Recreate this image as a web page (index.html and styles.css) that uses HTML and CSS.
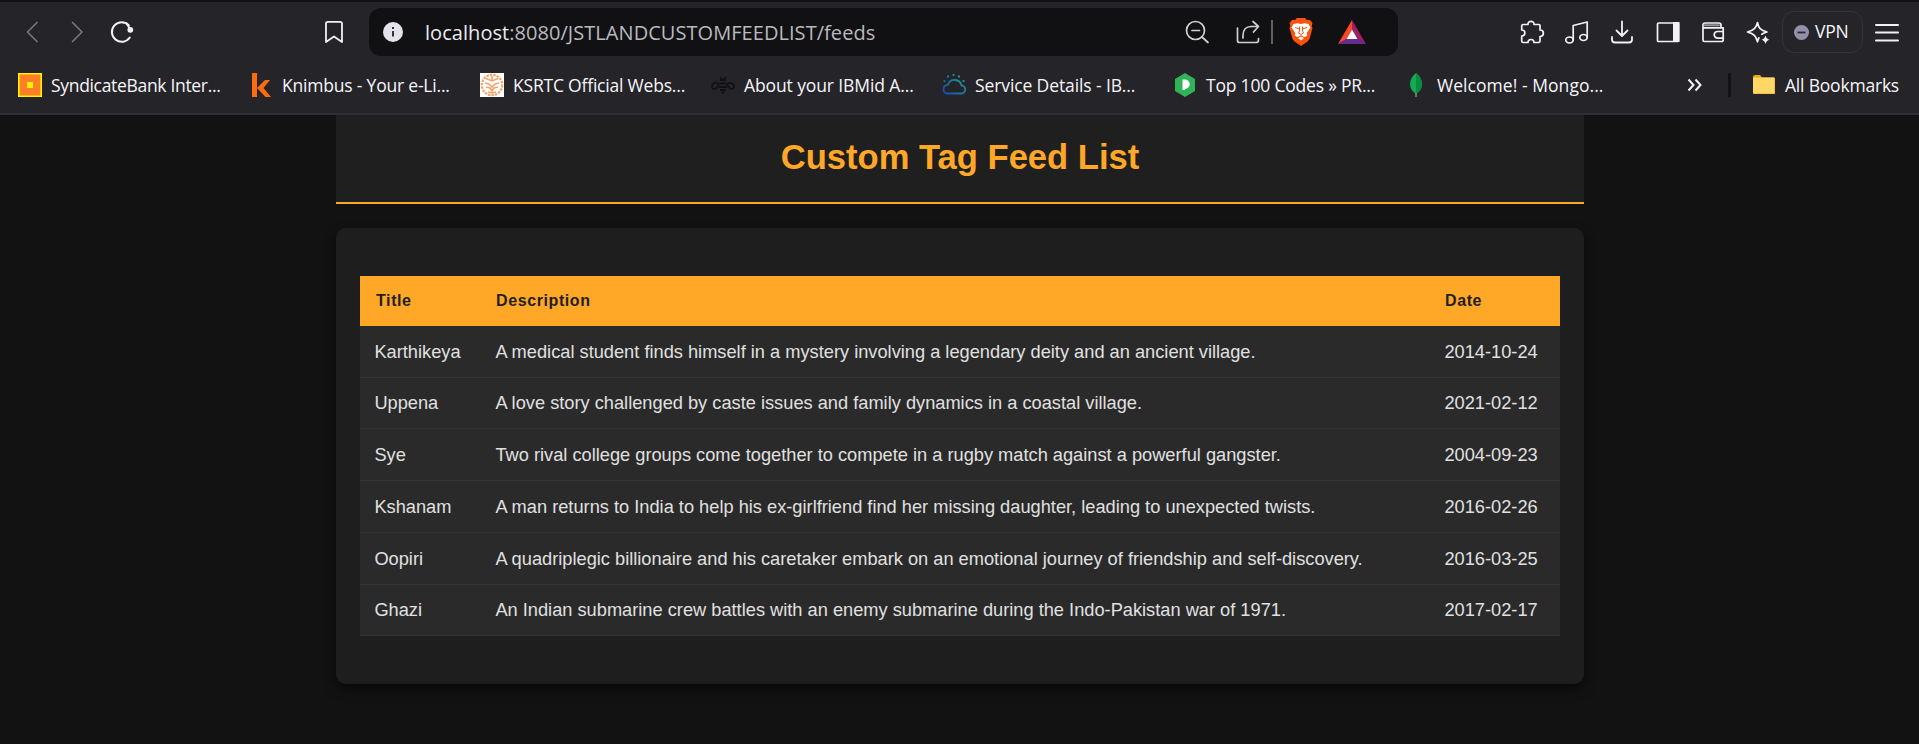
FILE: index.html
```html
<!DOCTYPE html>
<html lang="en">
<head>
<meta charset="utf-8">
<title>Custom Tag Feed List</title>
<link rel="stylesheet" href="styles.css">
</head>
<body>
<div class="browser">
  <div class="toolbar">
    <div class="nav">
      <svg class="icon dim" viewBox="0 0 28 28"><path d="M19 4.500 9.500 14l9.500 9.500"/></svg>
      <svg class="icon dim" viewBox="0 0 28 28"><path d="M9.500 4.500 19 14l-9.500 9.500"/></svg>
      <svg class="icon" viewBox="0 0 28 28"><path stroke-width="2" d="M21.800 19.500A9.800 9.800 0 1 1 20.800 7.200"/><circle class="solid" stroke="none" cx="22.300" cy="11.800" r="2.900"/><path stroke-width="2" d="M18.500 5.300 22 11"/></svg>
    </div>
    <svg class="icon mark" viewBox="0 0 28 28"><path stroke-width="1.800" d="M7.800 3.800h12.400a1.800 1.800 0 0 1 1.800 1.800V24l-8-5.500L6 24V5.600a1.800 1.800 0 0 1 1.800-1.800z"/></svg>
    <div class="address">
      <svg class="info" viewBox="0 0 20 20"><circle cx="10" cy="10" r="10" fill="#e4e2ea"/><path d="M10 9v5.500M10 5v2" stroke="#333238" stroke-width="2"/></svg>
      <div class="url"><span class="host">localhost</span>:8080/JSTLANDCUSTOMFEEDLIST/feeds</div>
      <svg class="icon soft find" viewBox="0 0 28 28"><circle cx="12.500" cy="12.500" r="9"/><path d="M9 12.500h7.500M19 19l6 5.500"/></svg>
      <svg class="icon soft share" viewBox="0 0 28 28"><path d="M3.500 10v12.500a2 2 0 0 0 2 2H22a2.500 2.500 0 0 0 2.500-2.500v-1.500M9 20v-2.500C9 11.500 12 8.500 17 8.500h7M19 3.500l5.500 5-5 5.500"/></svg>
      <span class="bar"></span>
      <svg class="brave" viewBox="0 0 24 28"><path fill="#fb5208" d="m6 2 2-2h8l2 2 3 0 2.500 3-.8 3 .8 2-3 11-2 2.500L12 28l-6.500-4.500-2-2.500L.500 10l.8-2-.8-3L3 2z"/><path fill="#fff" d="m4.500 6 4-.8 3.500.8 3.500-.8 4 .8 2 3.500-3.800 5.500.6 2.500-2.300 1.500-2-.5L12 17l-2 1.500-2 .5-2.300-1.500.6-2.500L2.500 9.500z"/><path fill="#fff" d="m12 18.500 3 1.500-3 2.500-3-2.500z"/><path fill="none" stroke="#fb5208" stroke-width="1" d="m6 9.500 4 1.300M18 9.500l-4 1.300M10.500 8.500V13L9.500 15l2.500 1.500 2.500-1.500-1-2V8.500"/></svg>
      <svg class="bat" viewBox="0 0 28 24"><path fill="#ff4724" d="M14 0v9.500L8.500 19 0 24z"/><path fill="#9e1f63" d="m14 0 14 24-8.500-5L14 9.500z"/><path fill="#662d91" d="m0 24 8.500-5h11l8.500 5z"/><path fill="#fff" d="m14 9.500 5.500 9.500h-11z"/></svg>
    </div>
    <div class="tools">
      <svg class="icon" viewBox="0 0 28 28"><path d="M5 6.500h5C9.500 2.200 16.500 2.200 16 6.500h5a1 1 0 0 1 1 1V12c4.500 0 4.500 6.500 0 6.500V23a1.500 1.500 0 0 1-1.500 1.500H16c0-4-6-4-6 0H5.200A1.500 1.500 0 0 1 3.700 23v-5c4.300-.3 4.300-5.700 0-6V8A1.500 1.500 0 0 1 5 6.500z"/></svg>
      <svg class="icon" viewBox="0 0 28 28"><ellipse cx="6.500" cy="22" rx="3.700" ry="3"/><ellipse cx="20.500" cy="19.500" rx="3.700" ry="3"/><path d="M10.200 22V7.500l14-3.500v15.500"/></svg>
      <svg class="icon" viewBox="0 0 28 28"><path stroke-width="1.800" d="M14 3.500v14.300M8.500 12.500l5.500 5.500 5.500-5.500M4 19v2.500a3 3 0 0 0 3 3h14a3 3 0 0 0 3-3V19"/></svg>
      <svg class="icon" viewBox="0 0 28 28"><rect x="3.500" y="5" width="21" height="18.500" rx="1"/><path class="solid" stroke="none" d="M19 4h6.500v20H19z"/></svg>
      <svg class="icon" viewBox="0 0 28 28"><path d="M4 9V6.500A2 2 0 0 1 6 5h14a2 2 0 0 1 2 2v2M4 6.500V22a1.500 1.500 0 0 0 1.500 1.500h17.200A1.500 1.500 0 0 0 24.200 22V9.800H5M24 13.500h-5.500a3.300 3.300 0 0 0 0 6.600H24"/><path stroke="#96959a" stroke-width="2" d="M5.500 7.200H20"/></svg>
      <svg class="icon" viewBox="0 0 28 28"><path d="M13.500 4.500c1 5.500 2.800 7.500 9.500 9.500-2.500.7-3.800 1.200-5.200 2.200M13.500 4.500C12 10 10 12.300 3.500 14c6.500 1.700 8.500 4 10 9.800.5-2 .8-2.800 1.400-4"/><path class="solid" stroke="none" d="M21.500 17.500q.7 3.500 4.200 4.200-3.500.7-4.200 4.300-.7-3.600-4.200-4.300 3.500-.7 4.200-4.200z"/></svg>
    </div>
    <div class="vpn"><svg class="shield" viewBox="0 0 15 15"><circle cx="7.500" cy="7.500" r="7.500" fill="#9191a8"/><path d="M3.500 7.500h8" stroke="#29282e" stroke-width="1.800"/></svg><span>VPN</span></div>
    <svg class="icon menu" viewBox="0 0 28 28"><path stroke-width="2" d="M3 7h22M3 14.500h22M3 22.500h22"/></svg>
  </div>
  <div class="bookmarks">
    <div class="bookmark"><svg viewBox="0 0 24 24"><path fill="#ff7f27" stroke="#fff200" stroke-width="1.600" d="M.800.800h22.400v22.400H.800z"/><path fill="#fff200" d="M9 9h6v6H9z"/></svg><span class="tightest">SyndicateBank Inter...</span></div>
    <div class="bookmark"><svg viewBox="0 0 24 24"><path fill="none" stroke="#fb6c10" stroke-width="5" d="M5.500 0v24"/><path fill="#fb6c10" d="M16 7h5l-6.500 8L22 24h-5.500L8 15z"/></svg><span class="tight">Knimbus - Your e-Li...</span></div>
    <div class="bookmark"><svg viewBox="0 0 24 24"><path fill="#fff" d="M0 0h24v24H0z"/><g fill="none" stroke="#f5a26d"><circle cx="12" cy="12" r="10.200" stroke-width="2.200" stroke-dasharray="2.500 1"/><path stroke-width="1.600" d="M6 5.500 12 8l6-2.500M5 10l4 1 3 3 3-3 4-1M6 14l4 1 2 3 2-3 4-1M8 19l4 1 4-1M12 3v5"/></g></svg><span class="tight">KSRTC Official Webs...</span></div>
    <div class="bookmark"><svg viewBox="0 0 24 24"><g fill="none" stroke="#101012" stroke-width="1.500"><path d="M8 11C4 8 1 11 .800 14c1 3 5 3 7.200-3zM16 11c4-3 7 0 7.200 3-1 3-5 3-7.200-3z"/><path stroke-width="2" d="M9 7h6M8.500 10.500h7M8 14h8M9 17h6M10.500 19.500h3"/><path d="M9 4l2 2M15 4l-2 2"/></g></svg><span class="snug">About your IBMid A...</span></div>
    <div class="bookmark"><svg viewBox="0 0 24 24"><defs><linearGradient id="sky" x1="1" y1="0" x2="0" y2="1"><stop stop-color="#25a88e"/><stop offset=".5" stop-color="#1b789f"/><stop offset="1" stop-color="#174ab8"/></linearGradient></defs><path fill="none" stroke="url(#sky)" stroke-width="1.800" d="M5 20.500h14a4 4 0 0 0 .5-8A7 7 0 0 0 6 11.800 4.400 4.400 0 0 0 5 20.500zM11.500 1v2M5.500 2.500l1 2M17.500 2.500l-1 2M1.500 7.500l2 1M22.500 7.500l-2 1"/></svg><span class="snug">Service Details - IB...</span></div>
    <div class="bookmark"><svg viewBox="0 0 24 24"><path fill="#2fb457" d="M12 0 22 6v12l-10 6L2 18V6z"/><path fill="#fff" d="M9.500 6.500H12a4.600 4.600 0 0 1 0 9.500v1H9.500z"/></svg><span class="tight">Top 100 Codes » PR...</span></div>
    <div class="bookmark"><svg viewBox="0 0 24 24"><path fill="#13aa52" d="M12 0q6 5 6 11t-6 10Q6 17 6 11t6-11z"/><path fill="#0b8c42" d="M12 0q6 5 6 11t-6 10z"/><path stroke="#9a9a92" stroke-width="1.300" d="M12 20v4"/></svg><span class="wide">Welcome! - Mongo...</span></div>
    <svg class="more" viewBox="0 0 16 14"><path d="m1.500 1.500 5 5.500-5 5.500M8.500 1.500l5 5.500-5 5.500"/></svg>
    <span class="split"></span>
    <svg class="folder" viewBox="0 0 24 20"><path fill="#e9a512" d="M1 2a2 2 0 0 1 2-2h5l2 2.500h12V6H1z"/><rect x="1" y="2.500" width="22" height="16.500" rx="1.200" fill="#ffd765"/><path fill="#f4bd35" d="M22 3v15H2v.8h21V3z"/></svg>
    <span class="all tight">All Bookmarks</span>
  </div>
</div>
<main class="container">
  <header class="heading"><h1>Custom Tag Feed List</h1></header>
  <section class="card">
    <table class="feeds">
      <colgroup><col class="c-title"><col class="c-desc"><col class="c-date"></colgroup>
      <thead><tr><th>Title</th><th>Description</th><th>Date</th></tr></thead>
      <tbody>
        <tr><td>Karthikeya</td><td>A medical student finds himself in a mystery involving a legendary deity and an ancient village.</td><td>2014-10-24</td></tr>
        <tr><td>Uppena</td><td>A love story challenged by caste issues and family dynamics in a coastal village.</td><td>2021-02-12</td></tr>
        <tr><td>Sye</td><td>Two rival college groups come together to compete in a rugby match against a powerful gangster.</td><td>2004-09-23</td></tr>
        <tr><td>Kshanam</td><td>A man returns to India to help his ex-girlfriend find her missing daughter, leading to unexpected twists.</td><td>2016-02-26</td></tr>
        <tr><td>Oopiri</td><td>A quadriplegic billionaire and his caretaker embark on an emotional journey of friendship and self-discovery.</td><td>2016-03-25</td></tr>
        <tr><td>Ghazi</td><td>An Indian submarine crew battles with an enemy submarine during the Indo-Pakistan war of 1971.</td><td>2017-02-17</td></tr>
      </tbody>
    </table>
  </section>
</main>
</body>
</html>
```
FILE: styles.css
```css
* { box-sizing: border-box; }
body {
  margin: 0;
  height: 744px;
  overflow: hidden;
  background: #121212;
  color: #e0e0e0;
  font-family: "Liberation Sans", Arial, sans-serif;
}
svg { flex: none; display: block; }

/* Browser chrome */
.browser {
  height: 115px;
  background: #252429;
  border-top: 2px solid #111113;
  border-bottom: 2px solid #312f35;
  color: #f6f5f9;
  font-family: "Open Sans", "Noto Sans", sans-serif;
}
.toolbar { display: flex; align-items: center; height: 60px; padding-left: 18px; }
.icon {
  width: 28px;
  height: 28px;
  fill: none;
  stroke: #f2f2f4;
  stroke-width: 1.7;
  stroke-linecap: round;
  stroke-linejoin: round;
}
.icon .solid { fill: #f2f2f4; }
.dim { stroke: #77767b; }
.soft { stroke: #d0cfd4; }
.nav { display: flex; gap: 17px; }
.mark { margin-left: 184px; }
.address {
  display: flex;
  align-items: center;
  width: 1029px;
  height: 48px;
  margin-left: 21px;
  padding-left: 14px;
  border-radius: 12px;
  background: #111113;
}
.info { width: 20px; height: 20px; }
.url {
  width: 758px;
  margin-left: 22px;
  padding-top: 1px;
  font-size: 20px;
  line-height: 28px;
  letter-spacing: 0.05px;
  white-space: nowrap;
  color: #bab9bf;
}
.host { color: #eceaf1; }
.share { margin-left: 23px; }
.bar { width: 2px; height: 24px; margin-left: 9px; background: #626166; }
.brave { width: 24px; height: 28px; margin-left: 16px; }
.bat { width: 28px; height: 24px; margin-left: 25px; }
.tools { display: flex; gap: 17.2px; margin-left: 120px; }
.vpn {
  display: flex;
  align-items: center;
  gap: 6px;
  width: 81px;
  height: 42px;
  margin-left: 10px;
  padding-left: 11px;
  border: 1px solid #343339;
  border-radius: 12px;
  font-size: 17.5px;
  letter-spacing: -0.2px;
}
.vpn span { padding-bottom: 2px; }
.shield { width: 15px; height: 15px; }
.menu { margin-left: 10px; }

.bookmarks { display: flex; align-items: center; height: 46px; padding-left: 18px; font-size: 17.5px; white-space: nowrap; }
.bookmark { display: flex; align-items: center; gap: 9px; width: 231px; flex: none; }
.bookmark svg { width: 24px; height: 24px; }
.bookmark span, .all { padding-bottom: 1px; }
.tightest { letter-spacing: -0.32px; }
.tight { letter-spacing: -0.2px; }
.snug { letter-spacing: -0.11px; }
.wide { letter-spacing: 0.05px; }
.more { width: 16px; height: 14px; margin-left: 52px; fill: none; stroke: #f2f2f4; stroke-width: 2; }
.split { width: 3px; height: 24px; margin-left: 25px; background: #131315; }
.folder { width: 24px; height: 20px; margin-left: 21px; }
.all { margin-left: 9px; }

/* Page */
.container { width: 1248px; margin: 0 auto 0 336px; }
.heading {
  height: 89px;
  padding-top: 21px;
  background: #1f1f1f;
  border-bottom: 2px solid #ffa726;
  text-align: center;
}
h1 { margin: 0; font-size: 34.600px; line-height: 42px; color: #ffa726; }
.card {
  height: 456px;
  margin-top: 24px;
  padding: 48px 24px;
  border-radius: 10px;
  background: #1e1e1e;
  box-shadow: 0 5px 12px rgba(0, 0, 0, 0.5);
}
.feeds { width: 1200px; table-layout: fixed; border-collapse: separate; border-spacing: 0; }
.c-title { width: 121px; }
.c-desc { width: 949px; }
.c-date { width: 130px; }
th {
  height: 50px;
  padding: 0 15px;
  background: #ffa726;
  color: #1f1f1f;
  font-size: 16px;
  letter-spacing: 0.6px;
  text-align: left;
}
th:first-child { padding-left: 16px; }
td {
  height: 52px;
  padding: 0 14.400px;
  background: #2a2a2a;
  border-bottom: 1px solid #333;
  font-size: 18.240px;
  white-space: nowrap;
}
tr:nth-child(2) td, tr:nth-child(6) td { height: 51px; }
```
